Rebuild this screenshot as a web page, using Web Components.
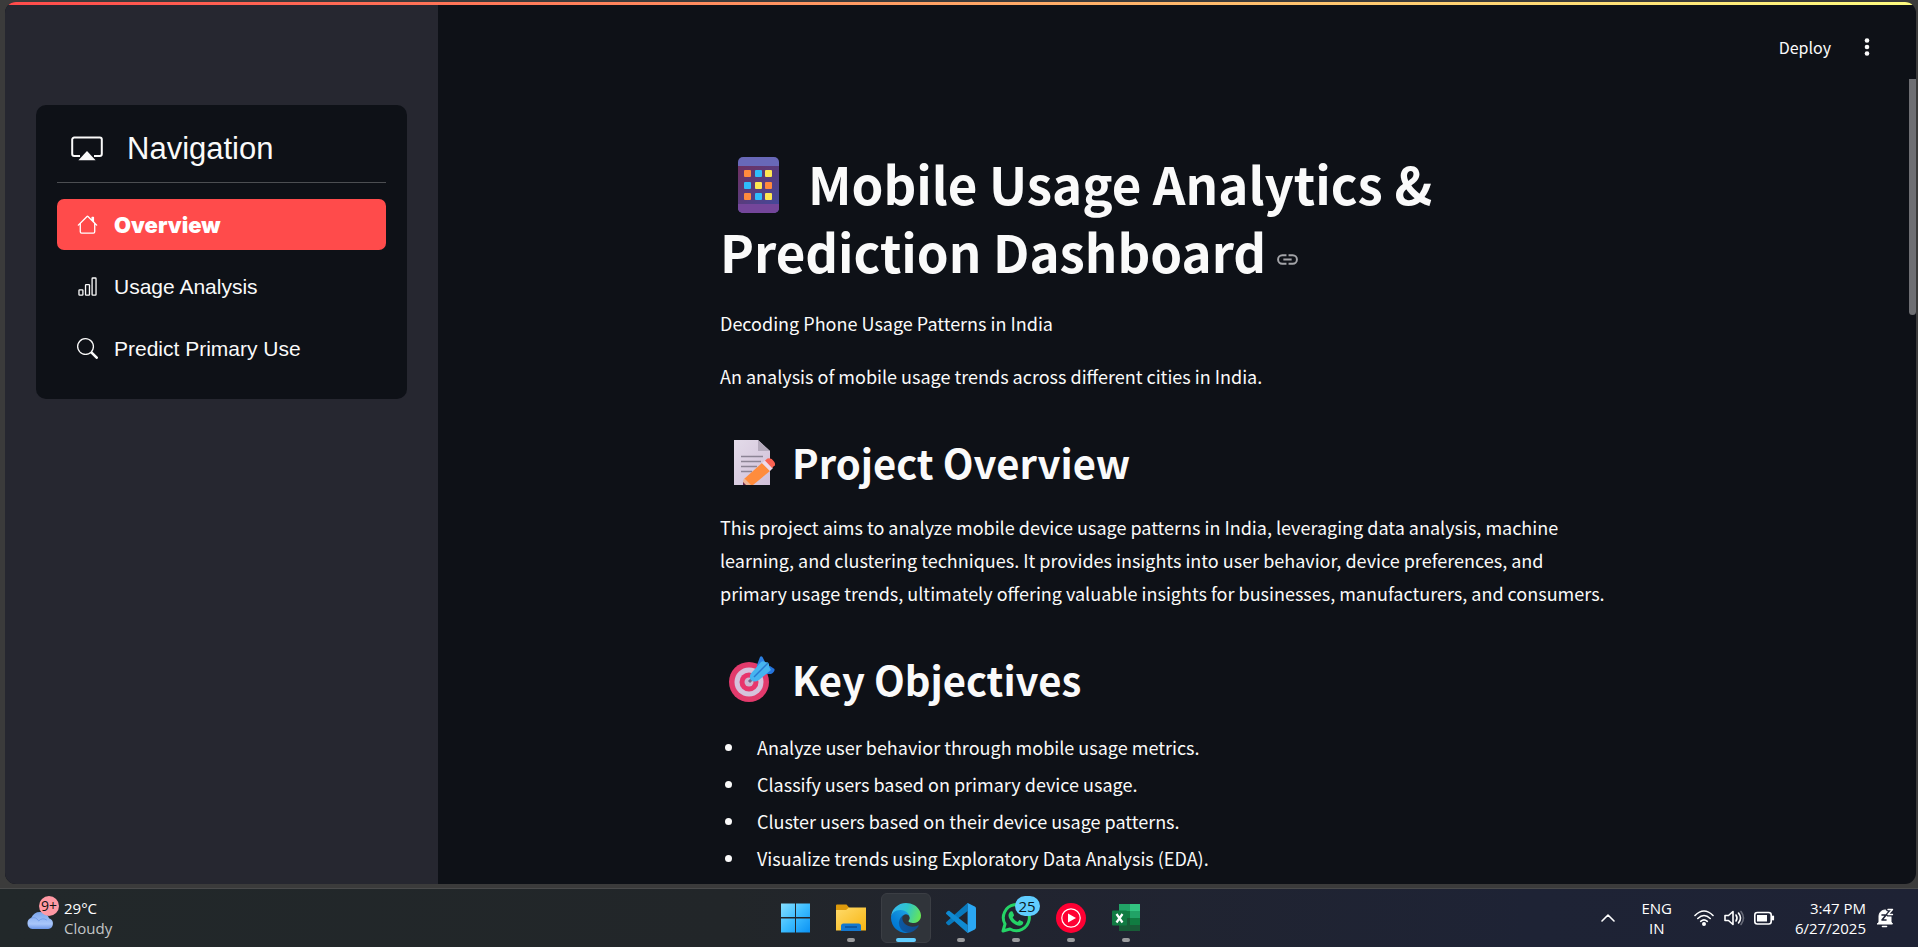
<!DOCTYPE html>
<html lang="en">
<head>
<meta charset="utf-8">
<title>Mobile Usage Analytics</title>
<style>
html, body { margin: 0; height: 100%; }
body { background: #3b3b3b; color: #fafafa; font-family: "Noto Sans CJK SC", "Noto Sans", sans-serif; }
</style>
</head>
<body>
<desktop-shell>
  <app-window slot="window">
    <nav-menu slot="sidebar" heading="Navigation">
      <nav-item icon="house" active>Overview</nav-item>
      <nav-item icon="bars">Usage Analysis</nav-item>
      <nav-item icon="search">Predict Primary Use</nav-item>
    </nav-menu>
    <app-toolbar slot="toolbar"></app-toolbar>
    <dashboard-article></dashboard-article>
  </app-window>
  <task-bar slot="taskbar"></task-bar>
</desktop-shell>

<script>
function define(name, html, setup) {
  const template = document.createElement('template');
  template.innerHTML = html;
  customElements.define(name, class extends HTMLElement {
    constructor() {
      super();
      this.attachShadow({ mode: 'open' }).append(template.content.cloneNode(true));
    }
    connectedCallback() { if (setup) setup(this, this.shadowRoot); }
  });
}

const NAV_ICONS = {
  cast: '<path d="M4.500 11.500H1.600A1 1 0 0 1 .600 10.500V3.300A1 1 0 0 1 1.600 2.300h12.800a1 1 0 0 1 1 1v7.200a1 1 0 0 1-1 1h-2.900" fill="none" stroke="currentColor"/><path d="m8 9 4.300 4.600H3.700z"/>',
  house: '<path d="M8.707 1.5a1 1 0 0 0-1.414 0L.646 8.146a.5.5 0 0 0 .708.708L2 8.207V13.5A1.5 1.5 0 0 0 3.5 15h9a1.5 1.5 0 0 0 1.5-1.5V8.207l.646.647a.5.5 0 0 0 .708-.708L13 5.793V2.5a.5.5 0 0 0-.5-.5h-1a.5.5 0 0 0-.5.5v1.293zM13 7.207V13.5a.5.5 0 0 1-.5.5h-9a.5.5 0 0 1-.5-.5V7.207l5-5z"/>',
  bars: '<path d="M4 11H2v3h2zm5-4H7v7h2zm5-5v12h-2V2zm-2-1a1 1 0 0 0-1 1v12a1 1 0 0 0 1 1h2a1 1 0 0 0 1-1V2a1 1 0 0 0-1-1zM6 7a1 1 0 0 1 1-1h2a1 1 0 0 1 1 1v7a1 1 0 0 1-1 1H7a1 1 0 0 1-1-1zm-5 4a1 1 0 0 1 1-1h2a1 1 0 0 1 1 1v3a1 1 0 0 1-1 1H2a1 1 0 0 1-1-1z"/>',
  search: '<path d="M11.742 10.344a6.5 6.5 0 1 0-1.397 1.398h-.001q.044.06.098.115l3.85 3.85a1 1 0 0 0 1.415-1.414l-3.85-3.85a1 1 0 0 0-.115-.1zM12 6.5a5.5 5.5 0 1 1-11 0 5.5 5.5 0 0 1 11 0"/>'
};

define('desktop-shell', `
<style>
  :host { display: grid; grid-template-rows: minmax(0, 1fr) auto; height: 100vh; }
  .window { min-height: 0; padding: 2px 2px 4px 5px; }
</style>
<div class="window"><slot name="window"></slot></div>
<slot name="taskbar"></slot>`);

define('app-window', `
<style>
  :host { display: grid; grid-template-columns: 433px minmax(0, 1fr); height: 100%; position: relative;
    overflow: hidden; border-radius: 11px; background: #0e1117; }
  .progress { position: absolute; top: 0; left: 0; right: 0; height: 3px;
    background: linear-gradient(90deg, #ff4b4b, #fffd80); }
  aside { background: #262730; padding: 103px 31px 0; }
  main { min-width: 0; overflow: hidden; }
  .thumb { position: absolute; top: 77px; right: 0; width: 7px; height: 236px; background: #6e6f73; border-radius: 0 0 4px 4px; }
</style>
<aside><slot name="sidebar"></slot></aside>
<main><slot name="toolbar"></slot><slot></slot></main>
<div class="progress"></div>
<div class="thumb"></div>`);

define('nav-menu', `
<style>
  :host { display: block; background: #0e1117; border-radius: 10px; padding: 22px 21px 25px;
    font-family: "Liberation Sans", Arial, sans-serif; }
  header { display: flex; align-items: center; gap: 24px; padding: 0 14px 11px; height: 44px; border-bottom: 1px solid #4c4e52; }
  svg { width: 32px; height: 32px; fill: #fafafa; color: #fafafa; }
  h2 { margin: 0; font-size: 31px; line-height: 44px; font-weight: 400; }
  nav { display: grid; gap: 11px; padding-top: 16px; }
</style>
<header><svg viewBox="0 0 16 16">${NAV_ICONS.cast}</svg><h2></h2></header>
<nav><slot></slot></nav>`, (el, root) => {
  root.querySelector('h2').textContent = el.getAttribute('heading');
});

define('nav-item', `
<style>
  :host { display: block; }
  a { display: flex; align-items: center; gap: 16px; height: 51px; padding: 0 20px; border-radius: 7px;
    color: #fafafa; text-decoration: none; font-size: 21px; line-height: 30px; }
  svg { width: 21px; height: 21px; fill: currentColor; flex: none; }
  :host([active]) a { background: #ff4b4b; color: #fff; font-family: Inter, "Liberation Sans", sans-serif; font-size: 22px; font-weight: 900; }
</style>
<a href="#"><svg viewBox="0 0 16 16"></svg><span><slot></slot></span></a>`, (el, root) => {
  root.querySelector('svg').innerHTML = NAV_ICONS[el.getAttribute('icon')];
});

define('app-toolbar', `
<style>
  :host { display: flex; justify-content: flex-end; align-items: center; gap: 26px; height: 61px; padding: 14px 39px 0; }
  button { border: 0; padding: 0; background: none; color: #fafafa; font: 16px/24px "Noto Sans CJK SC", sans-serif; }
  svg { display: block; width: 20px; height: 20px; fill: #fafafa; }
</style>
<button>Deploy</button>
<button aria-label="Main menu"><svg viewBox="0 0 20 20"><circle cx="10" cy="3.500" r="2.300"/><circle cx="10" cy="10" r="2.300"/><circle cx="10" cy="16.500" r="2.300"/></svg></button>`);

define('dashboard-article', `
<style>
  :host { display: block; max-width: 914px; margin: 0 auto; padding-top: 72px; }
  h1, h2, p, ul { margin: 0; color: #fafafa; }
  h1 { font-size: 51px; line-height: 68px; font-weight: 700; margin-bottom: 22px; }
  h2 { display: flex; align-items: center; font-size: 40px; line-height: 56px; font-weight: 700; margin: 41px 0 21px; }
  p, li { font-size: 18px; line-height: 33px; }
  p { max-width: 890px; }
  p + p { margin-top: 20px; }
  ul { display: grid; gap: 4px; padding: 3px 0 0 5px; list-style: none; }
  li { display: flex; align-items: center; gap: 25px; }
  li::before { content: ""; width: 7px; height: 7px; border-radius: 50%; background: #fafafa; }
  h1 .emoji { width: 41px; height: 56px; margin: 0 29px 0 18px; vertical-align: -8px; }
  h2 .emoji { width: 46px; height: 46px; margin: 0 17px 0 9px; }
  .link { display: inline-block; margin-left: 9px; vertical-align: 1px; }
  .link svg { display: block; width: 25px; height: 25px; fill: #a3a4a8; }
</style>
<h1><svg class="emoji" viewBox="0 0 41 56">
  <defs><linearGradient id="scr" x1="0" y1="0" x2="1" y2="1"><stop offset="0" stop-color="#6e3060"/><stop offset="1" stop-color="#44489a"/></linearGradient></defs>
  <rect width="41" height="56" rx="5" fill="#6868b8"/><path d="M0 46h41v5a5 5 0 0 1-5 5H5a5 5 0 0 1-5-5z" fill="#74469a"/>
  <rect y="9" width="41" height="38" fill="url(#scr)"/>
  <g fill="#ff8a3d"><rect x="6" y="13" width="7" height="7" rx="1"/><rect x="27" y="25" width="7" height="7" rx="1"/><rect x="6" y="36" width="7" height="7" rx="1"/></g>
  <g fill="#2fbdfc"><rect x="17" y="13" width="7" height="7" rx="1"/><rect x="6" y="25" width="7" height="7" rx="1"/><rect x="17" y="36" width="7" height="7" rx="1"/></g>
  <g fill="#ffe752"><rect x="27" y="13" width="7" height="7" rx="1"/><rect x="17" y="25" width="7" height="7" rx="1"/><rect x="27" y="36" width="7" height="7" rx="1"/></g>
</svg>Mobile Usage Analytics &amp; Prediction Dashboard<a class="link" href="#" aria-label="Link to heading"><svg viewBox="0 0 24 24"><path d="M3.900 12A3.100 3.100 0 0 1 7 8.900h4V7H7a5 5 0 0 0 0 10h4v-1.900H7A3.100 3.100 0 0 1 3.900 12zM8 13h8v-2H8zm9-6h-4v1.900h4a3.100 3.100 0 0 1 0 6.200h-4V17h4a5 5 0 0 0 0-10z"/></svg></a></h1>
<p>Decoding Phone Usage Patterns in India</p>
<p>An analysis of mobile usage trends across different cities in India.</p>
<h2><svg class="emoji" viewBox="0 0 46 46">
  <defs><linearGradient id="pg" x1="0" y1="0" x2="1" y2="1"><stop offset="0" stop-color="#e3dbe9"/><stop offset="1" stop-color="#d0bfd8"/></linearGradient></defs>
  <path d="M5 1h24l12 11v34H5z" fill="url(#pg)"/><path d="M29 1l12 11H29z" fill="#b5abbd"/>
  <path d="M12 17.500h22M12 22.500h20M12 27.500h16M12 32.500h11" stroke="#8c8495" stroke-width="1.600"/>
  <path d="M14 46l1-6 18-16 8 8-17 14z" fill="#ff8c3c"/><path d="M14 46l1-7 7 7z" fill="#efb595"/><path d="M14 46v-3l3 3z" fill="#6a2b50"/>
  <path d="M33 24l3-2.600 8 7.500-3 3z" fill="#f0dbe9"/><path d="M36 21.500l2.500-2q4-1 6.500 3t0 4.500L43 29z" fill="#fa6252"/>
</svg>Project Overview</h2>
<p>This project aims to analyze mobile device usage patterns in India, leveraging data analysis, machine learning, and clustering techniques. It provides insights into user behavior, device preferences, and primary usage trends, ultimately offering valuable insights for businesses, manufacturers, and consumers.</p>
<h2><svg class="emoji" viewBox="0 0 46 46">
  <circle cx="20" cy="26" r="20" fill="#e23a6c"/><circle cx="20" cy="26" r="14.500" fill="#d5c2dc"/><circle cx="20" cy="26" r="9.500" fill="#e8356c"/><circle cx="20" cy="26" r="4.500" fill="#cbb8d2"/>
  <path d="M20 26l6-6" stroke="#77658a" stroke-width="3"/>
  <path d="M28 9L31 1q1-1.500 2.500 0L36 6v9L28 12z" fill="#2b80e3"/>
  <path d="M33 18l9 0q4-2 3.500-5L41 10l-7 1z" fill="#2574dc"/>
  <path d="M22 24q-2-2-.5-6L32 6q2-1.500 4 0l3 .5q1.500 2 1 4L42 14 30 24q-5 3-8 0z" fill="#46b4ef"/>
  <path d="M25 21L39 7" stroke="#2878d0" stroke-width="1.500"/>
</svg>Key Objectives</h2>
<ul>
  <li>Analyze user behavior through mobile usage metrics.</li>
  <li>Classify users based on primary device usage.</li>
  <li>Cluster users based on their device usage patterns.</li>
  <li>Visualize trends using Exploratory Data Analysis (EDA).</li>
</ul>`);

define('task-icon', `
<style>
  :host { display: block; }
  button { position: relative; display: grid; place-items: center; width: 50px; height: 50px; padding: 0; border: 1px solid transparent; border-radius: 6px; background: none; }
  ::slotted(svg) { width: 30px; height: 30px; display: block; }
  button::after { content: ""; position: absolute; bottom: 0; width: 8px; height: 4px; border-radius: 2px; background: #9a9b9d; }
  :host([idle]) button::after { display: none; }
  :host([active]) button { background: #30343a; border-color: #3b3e44; }
  :host([active]) button::after { width: 20px; background: #60cdff; }
  .badge { position: absolute; top: 2px; left: 23px; height: 20px; padding: 0 4px; border-radius: 10px; background: #60cdff; color: #0a1a24; font: 15px/20px "Open Sans", sans-serif; }
  .badge:empty { display: none; }
</style>
<button><slot></slot><span class="badge"></span></button>`, (el, root) => {
  root.querySelector('button').setAttribute('aria-label', el.getAttribute('label'));
  root.querySelector('.badge').textContent = el.getAttribute('badge') || '';
});

define('task-bar', `
<style>
  :host { display: grid; grid-template-columns: 1fr auto 1fr; align-items: center; height: 58px; border-top: 1px solid #4a4b4c;
    background: linear-gradient(90deg, #22282a 0%, #222629 38%, #21242f 52%, #1e2335 80%, #1e2234 100%);
    font: 15px/20px "Open Sans", sans-serif; color: #fff; }
  .weather { display: flex; align-items: center; gap: 9px; padding-left: 25px; }
  .weather .pic { position: relative; width: 30px; height: 42px; }
  .weather svg { position: absolute; left: 0; top: 13px; width: 30px; height: 20px; }
  .count { position: absolute; left: 14px; top: -1px; width: 20px; height: 20px; border-radius: 50%; background: #ff99a4; color: #111; font-size: 14px; text-align: center; }
  .muted { color: #c3c5c6; }
  .apps { display: flex; gap: 5px; padding-left: 3px; }
  .tray { display: flex; align-items: center; justify-content: flex-end; padding-right: 24px; }
  .tray svg { display: block; fill: none; stroke: #fff; stroke-width: 1.600; stroke-linecap: round; stroke-linejoin: round; }
  .chev { width: 14px; height: 8px; margin-right: 26px; }
  .lang { text-align: center; margin-right: 21px; }
  .wifi, .vol, .bat { width: 22px; height: 18px; margin-right: 8px; }
  .bat { margin-right: 20px; }
  .clock { text-align: right; margin-right: 10px; }
  .bell { width: 18px; height: 20px; }
</style>
<div class="weather">
  <div class="pic">
    <svg viewBox="0 0 31 22"><defs><linearGradient id="cl" x1="0" y1="0" x2="0" y2="1"><stop offset="0" stop-color="#7ba6ec"/><stop offset=".7" stop-color="#a9c6fa"/><stop offset="1" stop-color="#6c96e8"/></linearGradient></defs>
    <path d="M7 21a6.500 6.500 0 0 1-1-12.500A10.500 10.500 0 0 1 25.500 9 6.200 6.200 0 0 1 24.500 21z" fill="url(#cl)"/><path d="M6 9q5-2 8 3 4-4 9-1" fill="none" stroke="#6f9ae8"/></svg>
    <span class="count">9+</span>
  </div>
  <div><div>29°C</div><div class="muted">Cloudy</div></div>
</div>
<div class="apps">
  <task-icon idle label="Start"><svg viewBox="0 0 30 30"><defs><linearGradient id="win" x1="0" y1="0" x2="1" y2="1"><stop offset="0" stop-color="#86dfff"/><stop offset=".5" stop-color="#3cbcff"/><stop offset="1" stop-color="#0a92f4"/></linearGradient></defs><path d="M0 .500h14V14H0zM15 .500H29V14H15zM0 15.500h14V29.500H0zM15 15.500H29V29.500H15z" fill="url(#win)"/></svg></task-icon>
  <task-icon label="File Explorer"><svg viewBox="0 0 30 30"><defs><linearGradient id="fo" x1="0" y1="0" x2="1" y2="1"><stop offset="0" stop-color="#ffdb6b"/><stop offset="1" stop-color="#f7b512"/></linearGradient></defs><path d="M0 2.500A1 1 0 0 1 1 1.500h9.500l3 3.500H30v5H0z" fill="#dd9a0c"/><path d="M0 7h10l3-2.500h17v23H0z" fill="url(#fo)"/><path d="M5 28v-5a2.500 2.500 0 0 1 2.500-2.500h15A2.500 2.500 0 0 1 25 23v5z" fill="#1478cf"/><path d="M9 24h12" stroke="#0c4f94" stroke-width="1.500"/></svg></task-icon>
  <task-icon active label="Microsoft Edge"><svg viewBox="0 0 256 256"><defs>
    <linearGradient id="e1" x1="63" y1="177" x2="242" y2="177" gradientUnits="userSpaceOnUse"><stop offset="0" stop-color="#0c59a4"/><stop offset="1" stop-color="#114a8b"/></linearGradient>
    <linearGradient id="e2" x1="157" y1="98" x2="46" y2="220" gradientUnits="userSpaceOnUse"><stop offset="0" stop-color="#1b9de2"/><stop offset=".2" stop-color="#1595df"/><stop offset=".7" stop-color="#0680d7"/><stop offset="1" stop-color="#0078d4"/></linearGradient>
    <linearGradient id="e4" x1="20" y1="40" x2="256" y2="130" gradientUnits="userSpaceOnUse"><stop offset="0" stop-color="#35b9ef"/><stop offset=".45" stop-color="#2fc5c9"/><stop offset="1" stop-color="#6be84c"/></linearGradient></defs>
    <path d="M231 190.500c-3.400 1.800-6.900 3.300-10.500 4.700a101.900 101.900 0 0 1-35.900 6.500c-47.300 0-88.500-32.500-88.500-74.300a31.500 31.500 0 0 1 16.400-27.300c-42.800 1.800-53.800 46.400-53.800 72.500 0 73.900 68.100 81.400 82.800 81.400 7.900 0 19.800-2.300 27-4.600l1.300-.4a128.300 128.300 0 0 0 66.600-52.800 4 4 0 0 0-5.400-5.700z" fill="url(#e1)"/>
    <path d="M105.700 241.400a79.200 79.200 0 0 1-22.700-21.300 80.700 80.700 0 0 1 29.500-120c3.200-1.500 8.500-4.100 15.600-4a32.400 32.400 0 0 1 25.700 13 31.900 31.900 0 0 1 6.300 18.700c0-.2 24.500-79.600-80-79.600C36 48.200 0 89.800 0 126.300a130.500 130.500 0 0 0 12.100 56 128 128 0 0 0 156.400 67 75.500 75.500 0 0 1-62.800-7.900z" fill="url(#e2)"/>
    <path d="M152.300 148.900c-.8 1-3.300 2.500-3.300 5.700 0 2.600 1.700 5.100 4.700 7.200 14.400 10 41.500 8.700 41.600 8.700a59.600 59.600 0 0 0 30.300-8.300A61.400 61.400 0 0 0 256 109.200c.3-22.400-8-37.300-11.300-43.900C223.500 23.900 177.700 0 128 0A128 128 0 0 0 0 126.200c.5-36.500 36.800-66 80-66 3.500 0 23.500.3 42 10 16.300 8.600 24.900 18.900 30.800 29.200 6.200 10.700 7.300 24.100 7.300 29.500 0 5.300-2.700 13.300-7.800 20z" fill="url(#e4)"/></svg></task-icon>
  <task-icon label="Visual Studio Code"><svg viewBox="0 0 100 100"><path d="M71 99l25-12V13L71 1 29 40 11 26 3 30v40l8 4 18-14zM72 27v46L41 50zM11 38l12 12-12 12z" fill="none"/><path d="M72 2v25L11 74q-3 1-5-1l-5-5q-2-3 0-5L68 3z" fill="#0879bd"/><path d="M72 98V73L11 26q-3-1-5 1l-5 5q-2 3 0 5l67 60z" fill="#0f8ad2"/><path d="M69 1q2-1 5 0l22 11q4 2 4 6v64q0 4-4 6L74 99q-3 1-5 0 3-1 3-5V6q0-4-3-5z" fill="#2aa7f3"/></svg></task-icon>
  <task-icon label="WhatsApp" badge="25"><svg viewBox="0 0 30 30"><path d="M2 28l2-7A13 13 0 1 1 9 26z" fill="none" stroke="#25d366" stroke-width="3" stroke-linejoin="round"/><path d="M8.500 9.500c1.500-2 3-1.500 3.500 0l1 2.500c.300 1-.8 1.600-1.300 2.500 1.300 2.300 3 3.600 5 4.500l1.700-1.900 3.600 1.700c1 2-1.500 4-3.500 4-5.500-.5-10.500-5.500-11-10 0-1.300.3-2.500 1-3.300z" fill="#25d366"/></svg></task-icon>
  <task-icon label="YouTube Music"><svg viewBox="0 0 30 30"><circle cx="15" cy="15" r="15" fill="#ff0033"/><circle cx="15" cy="15" r="9.200" fill="none" stroke="#fff" stroke-width="1.200"/><path d="M12 10.500l8 4.500-8 4.500z" fill="#fff"/></svg></task-icon>
  <task-icon label="Excel"><svg viewBox="0 0 30 30"><path d="M8 1h11v7H8z" fill="#21a366"/><path d="M19 1h10v7H19z" fill="#33c481"/><path d="M8 8h11v7H8z" fill="#107c41"/><path d="M19 8h10v7H19z" fill="#21a366"/><path d="M8 15h11v13H8z" fill="#185c37"/><path d="M19 15h10v7H19z" fill="#107c41"/><path d="M19 22h10v6H19z" fill="#185c37"/><rect x="1" y="7.500" width="15" height="15" rx="1" fill="#117b43"/><path d="M5.500 11l6 8.500M11.500 11l-6 8.500" stroke="#fff" stroke-width="2.200"/></svg></task-icon>
</div>
<div class="tray">
  <svg class="chev" viewBox="0 0 14 8"><path d="M1 7l6-6 6 6"/></svg>
  <div class="lang"><div>ENG</div><div>IN</div></div>
  <svg class="wifi" viewBox="0 0 22 18"><path d="M2 6.500q9-9 18 0M4.800 9.500q6.200-6 12.400 0M7.700 12.300q3.300-3 6.600 0"/><circle cx="11" cy="15" r="1.200" fill="#fff"/></svg>
  <svg class="vol" viewBox="0 0 22 18"><path d="M2 6.500h3.500L10 2.500v13l-4.500-4H2zM13 6q2 3 0 6M15.500 4q4 5 0 10"/><path d="M18 2.500q5 6.500 0 13" stroke="#686b78"/></svg>
  <svg class="bat" viewBox="0 0 22 18"><rect x="1.800" y="3.500" width="16.400" height="11.500" rx="2.500"/><rect x="4" y="6" width="10" height="6.500" fill="#fff" stroke="none"/><path d="M20 7.500v3" stroke-width="2.200"/></svg>
  <div class="clock"><div>3:47 PM</div><div>6/27/2025</div></div>
  <svg class="bell" viewBox="0 0 18 20"><path d="M3 14V8a6 6 0 0 1 12 0v6l1.500 2H1.500z" fill="#fff" stroke-width="1"/><path d="M6.500 18.500h4" /><path d="M6 7h4l-4 5h4" stroke="#1e2234"/><path d="M12 1.500h4.500L12 6.500h4.500" stroke="#1e2234" stroke-width="4"/><path d="M12 1.500h4.500L12 6.500h4.500" stroke-width="1.400"/></svg>
</div>`);
</script>
</body>
</html>
